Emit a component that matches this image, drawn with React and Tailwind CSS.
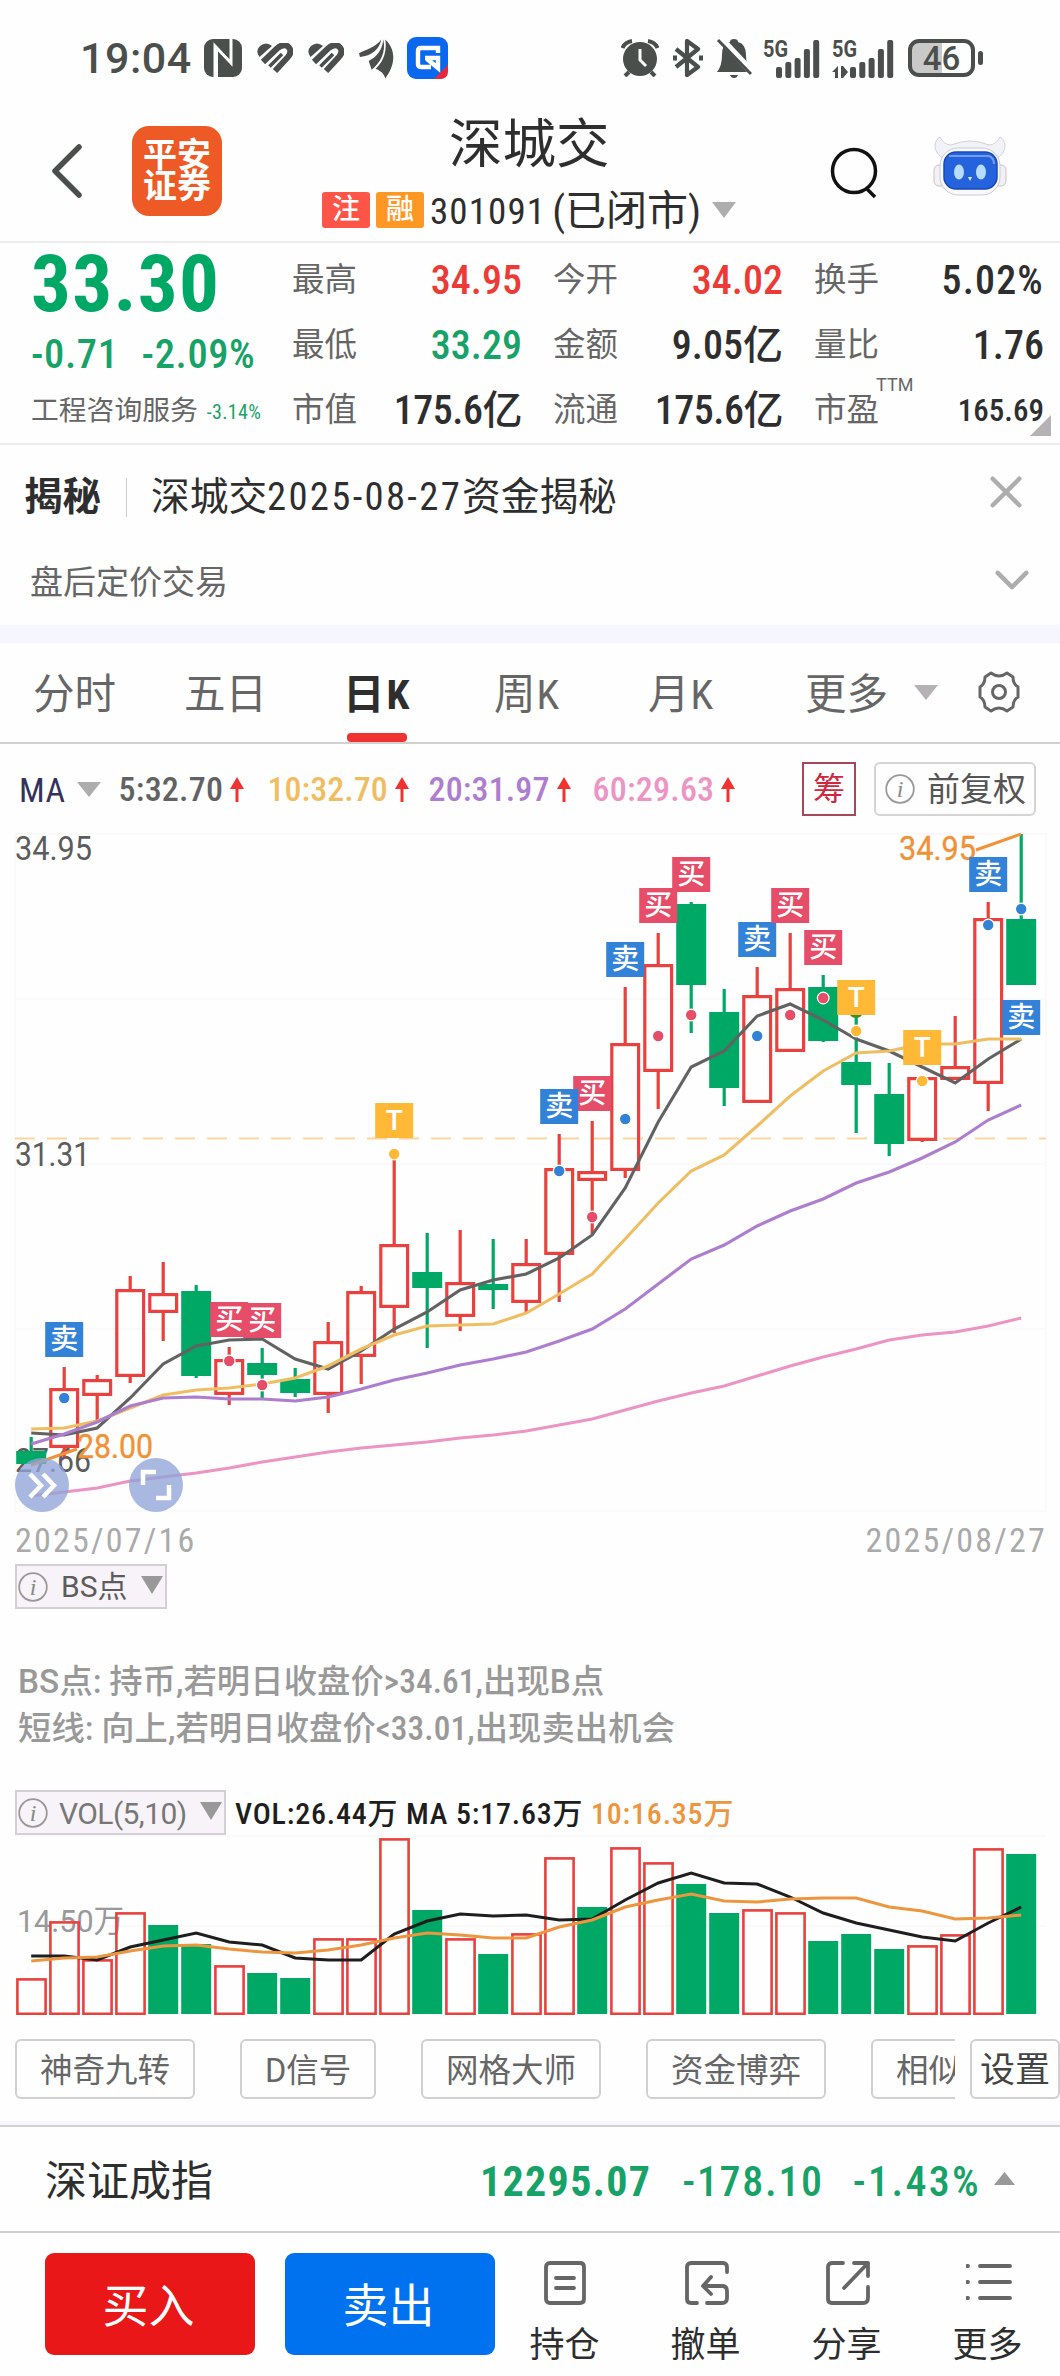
import { ChevronDown, X } from 'lucide-react'

// ─── DATA ─────────────────────────────────────────────────────────────────────

// [bodyTop, bodyBottom, wickTop, wickBottom, up]
const CANDLES = [
  [1451, 1464, 1437, 1464, 0], [1388, 1448, 1367, 1457, 1], [1379, 1396, 1375, 1420, 1],
  [1289, 1377, 1276, 1383, 1], [1293, 1313, 1262, 1341, 1], [1291, 1376, 1285, 1378, 0],
  [1359, 1395, 1347, 1405, 1], [1363, 1375, 1348, 1398, 0], [1379, 1393, 1368, 1397, 0],
  [1341, 1395, 1322, 1413, 1], [1291, 1357, 1286, 1384, 1], [1244, 1308, 1154, 1333, 1],
  [1272, 1288, 1233, 1348, 0], [1282, 1317, 1230, 1331, 1], [1284, 1290, 1239, 1309, 0],
  [1263, 1303, 1239, 1313, 1], [1168, 1255, 1134, 1302, 1], [1171, 1181, 1121, 1234, 1],
  [1043, 1171, 987, 1178, 1], [964, 1072, 933, 1109, 1], [904, 985, 902, 1033, 0],
  [1012, 1088, 989, 1106, 0], [995, 1103, 967, 1103, 1], [988, 1052, 933, 1052, 1],
  [987, 1041, 975, 1042, 0], [1062, 1085, 1012, 1133, 0], [1094, 1144, 1063, 1156, 0],
  [1077, 1141, 1077, 1142, 1], [1066, 1080, 1016, 1080, 1], [918, 1084, 902, 1111, 1],
  [919, 985, 834, 985, 0],
]

const MA_LINES = [
  { color: '#626262', ys: [1433, 1435, 1428, 1398, 1364, 1346, 1340, 1339, 1359, 1369, 1351, 1329, 1312, 1290, 1280, 1274, 1258, 1235, 1188, 1122, 1067, 1051, 1016, 1004, 1020, 1039, 1051, 1067, 1083, 1059, 1039] },
  { color: '#f0be62', ys: [1429, 1428, 1421, 1408, 1395, 1390, 1388, 1384, 1378, 1366, 1349, 1335, 1326, 1325, 1324, 1313, 1294, 1274, 1239, 1203, 1171, 1155, 1126, 1096, 1071, 1053, 1051, 1044, 1044, 1039, 1039] },
  { color: '#ad7dce', ys: [1444, 1434, 1422, 1406, 1398, 1397, 1399, 1399, 1401, 1397, 1389, 1380, 1373, 1365, 1359, 1352, 1341, 1329, 1309, 1284, 1259, 1245, 1226, 1211, 1199, 1183, 1172, 1158, 1142, 1120, 1105] },
  { color: '#ec94c4', ys: [1496, 1492, 1488, 1481, 1477, 1473, 1468, 1462, 1457, 1452, 1448, 1445, 1442, 1438, 1435, 1431, 1425, 1419, 1410, 1401, 1393, 1386, 1376, 1366, 1357, 1349, 1340, 1335, 1332, 1326, 1318] },
]

// [candle index, label, box top, dot y]
const MARKS = [
  [1, '卖', 1322, 1398], [6, '买', 1302, 1361], [7, '买', 1303, 1385], [11, 'T', 1103, 1154],
  [17, '买', 1076, 1217], [16, '卖', 1089, 1171], [18, '卖', 942, 1119], [19, '买', 888, 1036],
  [20, '买', 857, 1015], [22, '卖', 922, 1036], [23, '买', 888, 1015], [24, '买', 930, 998],
  [25, 'T', 980, 1031], [27, 'T', 1030, 1081], [29, '卖', 857, 925], [30, '卖', 1000, 909],
]

const MARK_COLORS = { 卖: '#3282d8', 买: '#e64d68', T: '#ffb936' }

// [top of bar, up]
const VOLUMES = [
  [1978, 1], [1921, 1], [1959, 1], [1912, 1], [1925, 0], [1944, 0], [1965, 1], [1973, 0],
  [1978, 0], [1938, 1], [1938, 1], [1838, 1], [1910, 0], [1938, 1], [1954, 0], [1933, 1],
  [1857, 1], [1907, 0], [1847, 1], [1862, 1], [1884, 0], [1913, 0], [1909, 1], [1912, 1],
  [1941, 0], [1934, 0], [1949, 0], [1945, 1], [1934, 1], [1848, 1], [1854, 0],
]

const VOL_LINES = [
  { color: '#1e1e1e', ys: [1956, 1956, 1960, 1947, 1940, 1933, 1942, 1945, 1958, 1960, 1960, 1934, 1921, 1914, 1916, 1915, 1920, 1919, 1900, 1883, 1873, 1883, 1884, 1897, 1913, 1923, 1930, 1937, 1941, 1923, 1907] },
  { color: '#ec9640', ys: [1961, 1958, 1957, 1951, 1946, 1945, 1949, 1952, 1953, 1950, 1945, 1938, 1933, 1935, 1938, 1938, 1927, 1920, 1907, 1900, 1894, 1901, 1902, 1899, 1898, 1898, 1907, 1911, 1919, 1918, 1915] },
]

const RED = '#e8413e'
const GREEN = '#00a866'

const cx = i => 31.2 + i * 33
const toPoints = ys => ys.map((y, i) => `${cx(i)},${y}`).join(' ')

const STATS = [
  [['最高', '34.95', 'text-[#ec3a36]'], ['今开', '34.02', 'text-[#ec3a36]'], ['换手', '5.02%', 'text-[#2e2e2e] tracking-[1.2px]']],
  [['最低', '33.29', 'text-[#17a267]'], ['金额', '9.05亿', 'text-[#2e2e2e]'], ['量比', '1.76', 'text-[#2e2e2e]']],
  [['市值', '175.6亿', 'text-[#2e2e2e] tracking-[-.5px]'], ['流通', '175.6亿', 'text-[#2e2e2e] tracking-[-.5px]'], ['市盈', '165.69', 'text-[#2e2e2e]']],
]

// ─── APP ──────────────────────────────────────────────────────────────────────

export default function App() {
  return (
    <div className="w-[1060px] h-[2376px] overflow-hidden bg-[#fefefe] flex flex-col text-[#2e2e2e] whitespace-nowrap font-['Roboto','Noto_Sans_CJK_SC',sans-serif]">
      <StatusBar />
      <Header />
      <Quote />
      <Notices />
      <Tabs />
      <MaRow />
      <PriceChart />
      <div className="h-[48px] shrink-0 flex items-center justify-between pl-[15px] pr-[13px] text-[34px] leading-none text-[#aaa] tracking-[2.2px] [font-stretch:75%]">
        <span>2025/07/16</span>
        <span>2025/08/27</span>
      </div>
      <Signals />
      <VolumeHeader />
      <VolumeChart />
      <Tools />
      <IndexRow />
      <BottomBar />
    </div>
  )
}

// ─── TOP ──────────────────────────────────────────────────────────────────────

function StatusBar() {
  return (
    <div className="h-[116px] shrink-0 flex items-center pl-[80px] pr-[77px] text-[#4a4f4b]">
      <span className="w-[124px] text-[43px] leading-none font-medium tracking-[.5px]">19:04</span>
      <svg className="w-[38px] h-[38px]" viewBox="0 0 38 38">
        <rect width="38" height="38" rx="9" fill="currentColor" />
        <path d="M11 38V7l16 17V0" fill="none" stroke="#fefefe" strokeWidth="3" />
        <path d="M13 38V9l13 14" fill="none" stroke="#fefefe" strokeWidth="2" />
      </svg>
      <Heart className="ml-[15px] w-[36px] h-[31px]" />
      <Heart className="ml-[15px] w-[36px] h-[31px]" />
      <svg className="ml-[15px] w-[35px] h-[41px]" viewBox="0 0 36 41" fill="currentColor">
        <path d="M0 15C8 11 17 9 23 1c-2 10-10 17-22 18z" />
        <path d="M10 23c8-4 14-11 15-22 3 13-3 24-12 31z" />
        <path d="M17 31C25 24 29 13 27 1c12 11 10 27 0 40-1-4-3-7-10-10z" />
      </svg>
      <svg className="ml-[13px] w-[41px] h-[42px]" viewBox="0 0 41 42">
        <rect width="41" height="42" rx="9" fill="#0a68ee" />
        <path d="M27 42L41 28v6q0 8-8 8z" fill="#e8283a" />
        <path d="M31 16v-5H14q-3 0-3 3v13q0 3 3 3h10M18 21h13v10l-11-9" fill="none" stroke="#fff" strokeWidth="4.400" />
      </svg>
      <div className="flex-1" />
      <svg className="w-[38px] h-[38px]" viewBox="0 0 38 38">
        <circle cx="19" cy="20" r="17" fill="currentColor" />
        <path d="M1.500 9Q4 3 11 2M36.500 9Q34 3 27 2M8 33l-4 4M30 33l4 4" stroke="currentColor" strokeWidth="4" fill="none" />
        <path d="M19 10v11l6 6" stroke="#fefefe" strokeWidth="3" fill="none" />
      </svg>
      <svg className="ml-[14px] w-[30px] h-[38px]" viewBox="0 0 30 38" fill="none" stroke="currentColor" strokeWidth="4.200" strokeLinejoin="round">
        <path d="M3 10l22 18-11 8V2l11 8L3 28" />
        <path d="M0 19h4M26 19h4" strokeWidth="5" />
      </svg>
      <svg className="ml-[13px] w-[36px] h-[41px]" viewBox="0 0 36 41">
        <path d="M1 34q5-6 5-17Q6 5 14 4q0-3 4-3t4 3q8 2 8 13 0 11 5 17zM14 37h8q-1 3-4 3t-4-3z" fill="currentColor" />
        <path d="M4 0l32 34" stroke="#fefefe" strokeWidth="7" />
        <path d="M2 2l33 34" stroke="currentColor" strokeWidth="3" />
      </svg>
      <Signal className="ml-[11px] w-[57px]" />
      <Signal className="ml-[12px] w-[61px]" data />
      <div className="ml-[15px] w-[67px] h-[38px] rounded-[11px] border-[4px] border-current bg-linear-to-r from-[#c9c9c9] from-50% to-transparent to-50% flex items-center justify-center text-[33px] leading-none font-medium">
        46
      </div>
      <div className="ml-[3px] w-[5px] h-[14px] rounded bg-current" />
    </div>
  )
}

function Heart({ className }) {
  return (
    <svg className={className} viewBox="0 0 36 31">
      <path d="M2.500 14Q-2 8 3 3q6-5 12 0z" fill="currentColor" />
      <path d="M6 19L20 5.500q7-6 11.500-1.500 4.500 5-1 10.500L18 28" fill="none" stroke="currentColor" strokeWidth="6" />
      <path d="M12.500 23.500L25 11" stroke="currentColor" strokeWidth="3.600" />
    </svg>
  )
}

function Signal({ className, data }) {
  const x0 = data ? 18 : 13
  return (
    <svg className={`${className} h-[39px] overflow-visible`} viewBox={`0 0 ${data ? 61 : 57} 39`} fill="currentColor">
      <text x="0" y="18" fontSize="24" fontWeight="700" textLength="25" lengthAdjust="spacingAndGlyphs">5G</text>
      {[28, 23, 19, 10, 1].map((y, i) => (
        <rect key={y} x={x0 + i * 9.3} y={y} width="6" height={39 - y} rx="2" />
      ))}
      {data && <path d="M6 27v12H3v-6H0zM9 27h2l5 6-5 6H9z" />}
    </svg>
  )
}

function Header() {
  return (
    <div className="h-[127px] shrink-0 border-b-2 border-[#ececec] flex items-start">
      <svg className="ml-[51px] mt-[28px] w-[32px] h-[54px]" viewBox="0 0 32 54" fill="none" stroke="#4a4f4b" strokeWidth="5.500" strokeLinecap="round" strokeLinejoin="round">
        <path d="M28 3L4 27l24 24" />
      </svg>
      <div className="ml-[49px] mt-[10px] w-[90px] h-[90px] rounded-[17px] bg-[#ed5a25] text-white text-[34px] leading-[31px] font-bold flex flex-col items-center justify-center">
        <span>平安</span>
        <span>证券</span>
      </div>
      <div className="ml-[100px] w-[416px] flex flex-col">
        <div className="mt-[2px] pl-[127px] text-[53.500px] leading-[54px]">深城交</div>
        <div className="mt-[20px] flex items-center h-[36px]">
          <span className="w-12 h-9 rounded-[3px] bg-[#ff5549] text-white text-[28px] font-medium flex items-center justify-center">注</span>
          <span className="ml-[6px] w-12 h-9 rounded-[3px] bg-[#ff9724] text-white text-[28px] font-medium flex items-center justify-center">融</span>
          <span className="ml-[6px] mt-[3px] text-[37px] leading-none tracking-[1.100px] [font-stretch:75%]">301091</span>
          <span className="ml-[6px] mt-[2px] w-[151px] text-[41px] leading-none [font-stretch:75%]">(已闭市)</span>
          <Tri className="ml-[9px] w-6 h-4 text-[#adadad]" />
        </div>
      </div>
      <svg className="ml-[91px] mt-[31px] w-[50px] h-[52px]" viewBox="0 0 50 52" fill="none" stroke="#111" strokeWidth="3.500">
        <circle cx="25" cy="24" r="21.500" />
        <path d="M38 42l8 8" />
      </svg>
      <Robot />
    </div>
  )
}

function Robot() {
  return (
    <svg className="ml-[53px] mt-[20px] w-[76px] h-[62px]" viewBox="0 0 76 62">
      <path d="M14 24Q2 18 3 8q1-5 5-7 4 8 11 8Q38 1 57 9q7 0 11-8 4 2 5 7 1 10-11 16z" fill="#f2f3f9" stroke="#d2d2d8" />
      <rect x="2" y="29" width="72" height="21" rx="5" fill="#f3f0f4" stroke="#c9c3c8" />
      <rect x="8" y="12" width="60" height="47" rx="18" fill="#f8f8fd" stroke="#ccccd4" />
      <rect x="12" y="16" width="53" height="37" rx="12" fill="#2563dd" stroke="#1848b4" strokeWidth="1.500" />
      <path d="M17 20h40q5 2 5 8" fill="none" stroke="#6f9cf0" strokeWidth="2" />
      <ellipse cx="27" cy="36" rx="5" ry="7.500" fill="#b6dcff" />
      <ellipse cx="49" cy="36" rx="5" ry="7.500" fill="#b6dcff" />
      <path d="M36 41h4l-2 4z" fill="#dcecff" />
    </svg>
  )
}

function Tri({ className }) {
  return (
    <svg className={className} viewBox="0 0 24 16" preserveAspectRatio="none" fill="currentColor">
      <path d="M0 0h24L12 16z" />
    </svg>
  )
}

function Quote() {
  return (
    <div className="h-[202px] shrink-0 border-b-2 border-[#ececec] flex relative">
      <div className="w-[292px] pl-[31px] flex flex-col text-[#17a267]">
        <div className="mt-[11px] h-[60px] text-[79px] leading-[60px] font-bold text-[#00a866] tracking-[1.300px] [font-stretch:75%]">33.30</div>
        <div className="mt-[18px] h-[44px] flex gap-[23px] text-[40.500px] leading-[44px] font-medium tracking-[.600px] [font-stretch:75%]">
          <span>-0.71</span>
          <span>-2.09%</span>
        </div>
        <div className="mt-[16px] flex items-center leading-[36px]">
          <span className="text-[27.800px] text-[#666]">工程咨询服务</span>
          <span className="ml-[9px] mt-[2px] text-[20px] tracking-[.3px] [font-stretch:75%]">-3.14%</span>
        </div>
      </div>
      <div className="pt-[5px] flex flex-col">
        {STATS.map((row, r) => (
          <div key={r} className="flex gap-[31px] h-[65px] items-center">
            {row.map(([label, value, color]) => (
              <div key={label} className="w-[230px] flex items-center justify-between leading-none">
                <span className="text-[32.500px] text-[#666] flex">
                  {label}
                  {label === '市盈' && <sup className="text-[18px] leading-none -mt-[18px] -ml-[3px] top-0">TTM</sup>}
                </span>
                <span className={`${color} ${label === '市盈' ? 'text-[31px]' : 'text-[40px]'} font-medium [font-stretch:75%]`}>{value}</span>
              </div>
            ))}
          </div>
        ))}
      </div>
      <svg className="absolute right-[9px] bottom-[7px] w-[21px] h-[21px]" viewBox="0 0 21 21">
        <path d="M21 0v21H0z" fill="#b5b1b5" />
      </svg>
    </div>
  )
}

function Notices() {
  return (
    <div className="h-[198px] shrink-0 border-b-[18px] border-[#f6f6fe]">
      <div className="h-[104px] flex items-center pl-[24px] pr-[35px]">
        <span className="text-[38.500px] font-bold">揭秘</span>
        <span className="ml-[25px] w-px h-[39px] bg-[#ccc]" />
        <span className="ml-[24px] text-[38.700px] [font-stretch:75%]">
          深城交<span className="tracking-[2.300px]">2025-08-27</span>资金揭秘
        </span>
        <X className="ml-auto -mt-[10px] w-[38px] h-[38px] scale-[1.4] text-[#adadad]" strokeWidth={2} />
      </div>
      <div className="h-[66px] flex items-center pl-[30px] pr-[29px] pt-[1px]">
        <span className="text-[33px] text-[#666]">盘后定价交易</span>
        <ChevronDown className="ml-auto -mt-[5px] w-[38px] h-[38px] scale-[1.5] text-[#adadad]" strokeWidth={1.900} />
      </div>
    </div>
  )
}

// ─── CHART CONTROLS ───────────────────────────────────────────────────────────

function Tabs() {
  return (
    <div className="h-[101px] shrink-0 border-b-2 border-[#d0d0d0] flex text-[41.500px] leading-[103px] text-[#666] [font-stretch:75%]">
      <span className="ml-[33px] w-[151px]">分时</span>
      <span className="w-[159px]">五日</span>
      <span className="w-[151px] h-[99px] font-bold text-[#2e2e2e] flex flex-col">
        <span className="h-[90px] tracking-[2px]">日K</span>
        <span className="ml-[4px] w-[60px] h-[9px] rounded bg-[#f03230]" />
      </span>
      <span className="w-[154px] tracking-[1px]">周K</span>
      <span className="w-[157px] tracking-[1px]">月K</span>
      <span>更多</span>
      <Tri className="ml-[26px] mt-[42px] w-6 h-[15px] text-[#b5b1b5]" />
      <svg className="ml-[39px] mt-[27px] w-[44px] h-[44px]" viewBox="0 0 44 44" fill="none" stroke="#666" strokeWidth="3">
        <path d="M14 3q8 6 16 0l6 4q0 7 5 10v10q-5 3-5 10l-6 4q-8-6-16 0l-6-4q0-7-5-10V17q5-3 5-10z" strokeLinejoin="round" />
        <circle cx="22" cy="22" r="6.500" />
      </svg>
    </div>
  )
}

function Up() {
  return (
    <svg className="w-[14px] h-[25px] ml-[7px] mr-[-3px]" viewBox="0 0 14 25">
      <path d="M7 0l7 12H0z" fill="#f03230" />
      <path d="M7 8v17" stroke="#f03230" strokeWidth="3" />
    </svg>
  )
}

function Info({ className = 'w-[30px] h-[30px]' }) {
  return (
    <svg className={className} viewBox="0 0 30 30">
      <circle cx="15" cy="15" r="13.800" fill="none" stroke="#999" strokeWidth="1.800" />
      <text x="15" y="23" fontSize="24" fontStyle="italic" fill="#888" textAnchor="middle" className="font-['Liberation_Serif',serif]">i</text>
    </svg>
  )
}

function MaRow() {
  return (
    <div className="h-[89px] shrink-0 flex items-center pl-[19px] pr-6 pt-[1px] text-[34px] leading-none font-medium [font-stretch:75%]">
      <span className="mt-[2px] text-[#33335a] font-normal tracking-[.5px]">MA</span>
      <Tri className="ml-[11px] w-6 h-[15px] text-[#adadad]" />
      <span className="ml-[18px] w-[149px] flex items-center text-[#626262] tracking-[.2px]">5:32.70<Up /></span>
      <span className="w-[161px] flex items-center text-[#f0be62]">10:32.70<Up /></span>
      <span className="w-[164px] flex items-center text-[#ad7dce] tracking-[.1px]">20:31.97<Up /></span>
      <span className="flex items-center text-[#ec94c4] tracking-[.2px]">60:29.63<Up /></span>
      <span className="ml-auto w-[54px] h-[54px] border-2 border-[#a5485a] text-[#cc2940] text-[32px] font-normal flex items-center justify-center">筹</span>
      <span className="ml-[18px] w-[162px] h-[54px] border-2 border-[#d4d4d4] rounded-md text-[33px] font-normal text-[#555] flex items-center pl-[9px] gap-[12px]">
        <Info />
        前复权
      </span>
    </div>
  )
}

// ─── CHARTS ───────────────────────────────────────────────────────────────────

function PriceChart() {
  return (
    <svg className="w-[1060px] h-[683px] shrink-0" viewBox="0 833 1060 683" fontFamily="Roboto, 'Noto Sans CJK SC', sans-serif">
      <path d="M15 834H1046V1511H15zM15 999H1046M15 1164H1046M15 1329H1046" fill="none" stroke="#faf8f9" strokeWidth="1.500" />
      <path d="M15 1138.500H1046" stroke="#f9d6a0" strokeWidth="2" strokeDasharray="20 12" />
      <g fontSize="33.500" fill="#5c5c5c">
        <text x="15" y="860" textLength="77" lengthAdjust="spacingAndGlyphs">34.95</text>
        <text x="15" y="1166" textLength="75" lengthAdjust="spacingAndGlyphs">31.31</text>
        <text x="15" y="1472" textLength="76" lengthAdjust="spacingAndGlyphs">27.66</text>
      </g>
      {CANDLES.map(([top, bottom, high, low, up], i) => up ? (
        <g key={i} stroke={RED} strokeWidth="3.200" fill="none">
          <path d={`M${cx(i)} ${high}V${top}M${cx(i)} ${bottom}V${low}`} />
          <rect x={cx(i) - 13.4} y={top + 1.6} width="26.800" height={bottom - top - 3.2} />
        </g>
      ) : (
        <g key={i} fill={GREEN}>
          <rect x={cx(i) - 1.6} y={high} width="3.200" height={low - high} />
          <rect x={cx(i) - 15} y={top} width="30" height={bottom - top} />
        </g>
      ))}
      {MA_LINES.map(({ color, ys }) => (
        <polyline key={color} points={toPoints(ys)} fill="none" stroke={color} strokeWidth="3.100" />
      ))}
      <g fill="#f09238" stroke="#f09238" strokeWidth=".4" fontSize="33.500">
        <text x="899" y="860" textLength="77" lengthAdjust="spacingAndGlyphs">34.95</text>
        <text x="77" y="1458" textLength="76" lengthAdjust="spacingAndGlyphs">28.00</text>
      </g>
      <path d="M976 850L1021 834M31 1465L77 1449" stroke="#f09238" strokeWidth="3" />
      <path d="M850 1015h12q-2 3-6 3t-6-3z" fill="#3f8f2f" />
      {MARKS.map(([i, label, top, dot]) => (
        <g key={i}>
          <rect x={cx(i) - 19} y={top} width="38" height="35" fill={MARK_COLORS[label]} />
          <text x={cx(i)} y={top + 27} fontSize="28" fontWeight="500" fill="#fff" textAnchor="middle">{label}</text>
          <circle cx={cx(i)} cy={dot} r="5.800" fill={MARK_COLORS[label]} stroke="#fff" strokeWidth="1.200" />
        </g>
      ))}
      <g fill="#8fa4d8" fillOpacity=".78">
        <circle cx="42" cy="1485" r="27" />
        <circle cx="156" cy="1485" r="27" />
      </g>
      <path d="M30 1474l11 11.500-11 11.500M43 1474l11 11.500-11 11.500" fill="none" stroke="#fff" strokeWidth="4.500" />
      <path d="M143 1485v-13h13M169 1485v13h-13" fill="none" stroke="#fff" strokeWidth="4.500" />
    </svg>
  )
}

function Signals() {
  return (
    <div className="h-[226px] shrink-0 pl-[15px] flex flex-col items-start text-[#999]">
      <div className="w-[152px] h-[45px] border-2 border-[#d3cfd4] bg-[#f7f3f8] flex items-center pl-[1px] text-[30px] text-[#5c5c5c] leading-none">
        <Info />
        <span className="ml-[13px]">BS点</span>
        <Tri className="ml-auto mr-[2px] -mt-[4px] w-[22px] h-[18px] text-[#999]" />
      </div>
      <div className="mt-[49px] ml-[3px] text-[33.300px] leading-[47px] font-medium tracking-[.1px] [font-stretch:75%]">
        <p><span className="[font-stretch:100%]">BS</span>点: 持币,若明日收盘价&gt;34.61,出现<span className="[font-stretch:100%]">B</span>点</p>
        <p>短线: 向上,若明日收盘价&lt;33.01,出现卖出机会</p>
      </div>
    </div>
  )
}

function VolumeHeader() {
  return (
    <div className="h-[45px] shrink-0 pl-[15px] flex items-center leading-none">
      <div className="w-[211px] h-[45px] border-2 border-[#d3cfd4] bg-[#f7f3f8] flex items-center pl-[1px] text-[#777] text-[30px]">
        <Info />
        <span className="ml-[11px] mt-[2px] tracking-[-.6px]">VOL(5,10)</span>
        <Tri className="ml-auto mr-[2px] -mt-[4px] w-[22px] h-[18px] text-[#999]" />
      </div>
      <span className="ml-[9px] mt-[3px] text-[30px] tracking-[.800px] font-medium text-[#1e1e1e] [font-stretch:75%]">
        VOL:26.44万 MA 5:17.63万 <span className="text-[#ec9640]">10:16.35万</span>
      </span>
    </div>
  )
}

function VolumeChart() {
  return (
    <svg className="w-[1060px] h-[180px] shrink-0" viewBox="0 1835 1060 180" fontFamily="Roboto, 'Noto Sans CJK SC', sans-serif">
      <path d="M15 1836H1046M15 1926H1046" stroke="#f8f6f7" />
      <text x="17" y="1932" fontSize="32" fill="#999" textLength="107" lengthAdjust="spacingAndGlyphs">14.50万</text>
      {VOLUMES.map(([top, up], i) => up ? (
        <rect key={i} x={cx(i) - 13.8} y={top + 1.4} width="28.200" height={2012.4 - top} fill="none" stroke={RED} strokeWidth="2.600" />
      ) : (
        <rect key={i} x={cx(i) - 15} y={top} width="30" height={2014 - top} fill={GREEN} />
      ))}
      {VOL_LINES.map(({ color, ys }) => (
        <polyline key={color} points={toPoints(ys)} fill="none" stroke={color} strokeWidth="3" />
      ))}
    </svg>
  )
}

// ─── BOTTOM ───────────────────────────────────────────────────────────────────

function Tools() {
  const pill = 'h-[60px] shrink-0 border-2 border-[#d0d0d0] rounded-md flex items-center pl-[23px] pt-[4px] text-[32.500px] text-[#666]'
  return (
    <div className="h-[110px] shrink-0 pt-6 border-b-[4px] border-[#f6f6fe] flex">
      <div className="w-[955px] pl-[15px] flex gap-[45px] overflow-hidden">
        <span className={`${pill} w-[180px]`}>神奇九转</span>
        <span className={`${pill} w-[136px]`}>D信号</span>
        <span className={`${pill} w-[180px]`}>网格大师</span>
        <span className={`${pill} w-[180px]`}>资金博弈</span>
        <span className={`${pill} w-[120px]`}>相似</span>
      </div>
      <span className="ml-[15px] w-[90px] h-[60px] border-2 border-[#d0d0d0] rounded-md flex items-center justify-center pt-[4px] text-[35px] text-[#444]">设置</span>
    </div>
  )
}

function IndexRow() {
  return (
    <div className="h-[108px] shrink-0 border-y-2 border-[#d0d0d0] flex items-center px-[45px] pt-[5px] text-[42px] leading-none">
      <span>深证成指</span>
      <span className="ml-auto font-bold text-[#17a267] tracking-[1.300px] [font-stretch:75%]">12295.07</span>
      <span className="ml-[31px] font-medium text-[#17a267] tracking-[1.700px] [font-stretch:75%]">-178.10</span>
      <span className="ml-[29px] font-medium text-[#17a267] tracking-[2.300px] [font-stretch:75%]">-1.43%</span>
      <Tri className="ml-[13px] -mt-[6px] w-[21px] h-[13px] rotate-180 text-[#999]" />
    </div>
  )
}

const ACTIONS = [
  { label: '持仓', d: 'M7 3h30q4 0 4 4v32q0 4-4 4H7q-4 0-4-4V7q0-4 4-4zM13 18h18M13 28h18' },
  { label: '撤单', d: 'M43 12V7q0-4-4-4H7Q3 3 3 7v32q0 4 4 4h6M23 43h15q5 0 5-5V31q0-5-5-5H19M27 17l-8 9 8 8' },
  { label: '分享', d: 'M18 3H7Q3 3 3 7v32q0 4 4 4h31q5 0 5-5V27M29 3h14v13M43 3L19 28' },
  { label: '更多', d: 'M1 6h1M14 6h30M1 22h1M14 22h30M1 38h1M14 38h30' },
]

function BottomBar() {
  return (
    <div className="flex-1 flex items-start pt-[20px] pl-[45px]">
      <button className="w-[210px] h-[102px] rounded-[9px] bg-[#e91718] text-white text-[46px] pt-[4px] pr-[3px]">买入</button>
      <button className="ml-[30px] w-[210px] h-[102px] rounded-[9px] bg-[#0072f0] text-white text-[46px] pt-[4px] pr-[3px]">卖出</button>
      {ACTIONS.map(({ label, d }) => (
        <div key={label} className="w-[141px] flex flex-col items-center">
          <svg className="mt-[6px] w-[46px] h-[48px]" viewBox="0 0 46 46" fill="none" stroke="#666" strokeWidth="3.800" strokeLinecap="round" strokeLinejoin="round">
            <path d={d} />
          </svg>
          <span className="mt-[17px] -ml-[2px] text-[35px] leading-[44px]">{label}</span>
        </div>
      ))}
    </div>
  )
}
